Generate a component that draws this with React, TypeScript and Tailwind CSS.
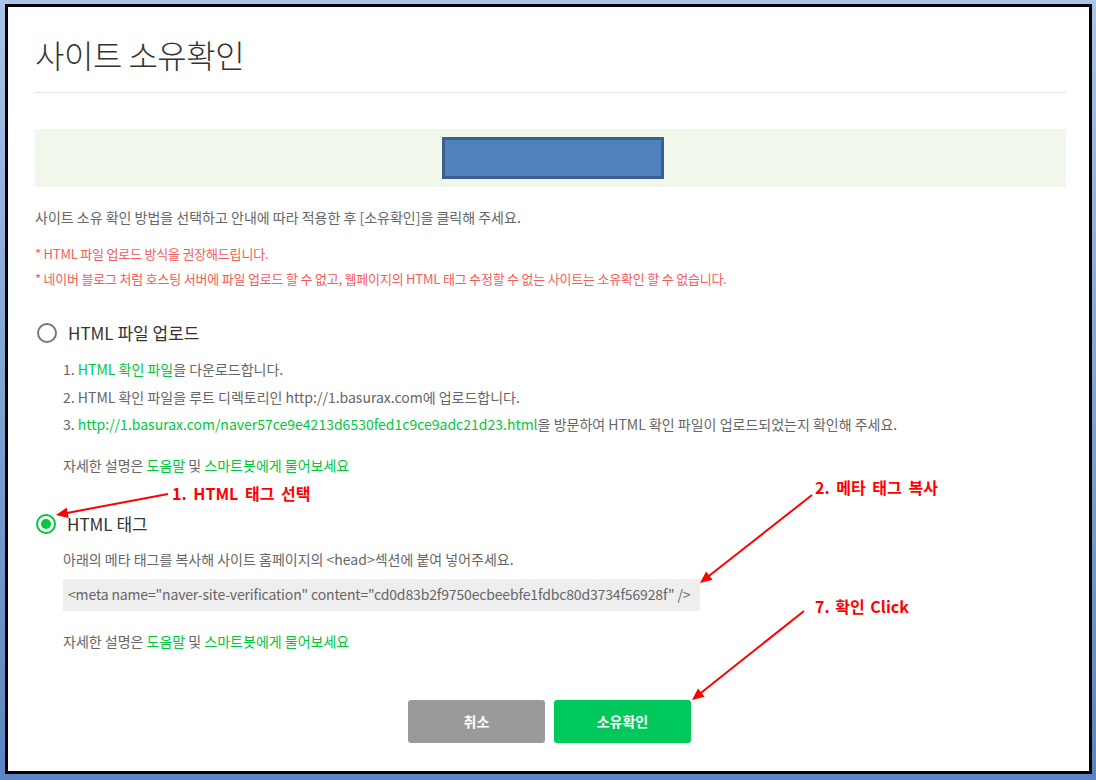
import React from 'react';

const green = 'text-[#00c73c]';

function Radio({ checked }: { checked?: boolean }) {
  if (checked) {
    return (
      <span className="flex h-[20px] w-[20px] items-center justify-center rounded-full border-[2.5px] border-[#00c73c] bg-white">
        <span className="h-[10px] w-[10px] rounded-full bg-[#00c73c]" />
      </span>
    );
  }
  return <span className="block h-[20px] w-[20px] rounded-full border-2 border-[#777] bg-white" />;
}

function HelpLine() {
  return (
    <p className="text-[14px] leading-[20px] text-[#666]">
      자세한 설명은 <span className={green}>도움말</span> 및 <span className={green}>스마트봇에게 물어보세요</span>
    </p>
  );
}

function Arrow({ x1, y1, x2, y2 }: { x1: number; y1: number; x2: number; y2: number }) {
  const a = Math.atan2(y2 - y1, x2 - x1);
  const len = 13;
  const w = 0.42;
  const p1 = [x2 - len * Math.cos(a - w), y2 - len * Math.sin(a - w)];
  const p2 = [x2 - len * Math.cos(a + w), y2 - len * Math.sin(a + w)];
  return (
    <g>
      <line x1={x1} y1={y1} x2={x2 - 6 * Math.cos(a)} y2={y2 - 6 * Math.sin(a)} stroke="#ff0000" strokeWidth={2} />
      <polygon points={`${x2},${y2} ${p1[0]},${p1[1]} ${p2[0]},${p2[1]}`} fill="#ff0000" />
    </g>
  );
}

export default function App() {
  return (
    <div
      className="relative h-[780px] w-[1096px] bg-gradient-to-b from-[#a9c4e6] to-[#5b84c1] pb-[6px] pl-[5px] pr-[4px] pt-[4px]"
      style={{ fontFamily: '"Noto Sans CJK KR", "Noto Sans", sans-serif' }}
    >
      <div className="h-full w-full border-[3px] border-black bg-white pl-[27px] pr-[23px]">
        <h1 className="pt-[27px] text-[32px] font-light leading-[40px] text-[#333] tracking-[-0.5px]">사이트 소유확인</h1>
        <div className="mt-[18px] h-px bg-[#e3e3e3]" />

        <div className="mt-[36px] flex h-[58px] items-center justify-center bg-[#f1f7ea]">
          <div className="ml-[4px] h-[42px] w-[222px] border-[3px] border-[#3b5f8e] bg-[#4f81bd]" />
        </div>

        <p className="mt-[20px] text-[14px] leading-[20px] text-[#666]">
          사이트 소유 확인 방법을 선택하고 안내에 따라 적용한 후 [소유확인]을 클릭해 주세요.
        </p>
        <div className="mt-[14px] text-[13px] leading-[25px] text-[#f55b5b] tracking-[-0.2px]">
          <p>* HTML 파일 업로드 방식을 권장해드립니다.</p>
          <p>* 네이버 블로그 처럼 호스팅 서버에 파일 업로드 할 수 없고, 웹페이지의 HTML 태그 수정할 수 없는 사이트는 소유확인 할 수 없습니다.</p>
        </div>

        <div className="mt-[30px] flex h-[24px] items-center">
          <span className="ml-[2px]"><Radio /></span>
          <span className="ml-[11px] text-[17px] leading-[24px] text-[#333]">HTML 파일 업로드</span>
        </div>
        <div className="ml-[28px] mt-[11px] text-[14px] leading-[27.5px] text-[#666]">
          <p>
            1. <span className={green}>HTML 확인 파일</span>을 다운로드합니다.
          </p>
          <p>2. HTML 확인 파일을 루트 디렉토리인 http://1.basurax.com에 업로드합니다.</p>
          <p>
            3. <span className={green}>http://1.basurax.com/naver57ce9e4213d6530fed1c9ce9adc21d23.html</span>을 방문하여 HTML 확인 파일이 업로드되었는지 확인해 주세요.
          </p>
          <div className="mt-[16px]">
            <HelpLine />
          </div>
        </div>

        <div className="mt-[37px] flex h-[24px] items-center">
          <span className="ml-[1px]"><Radio checked /></span>
          <span className="ml-[11px] text-[17px] leading-[24px] text-[#333]">HTML 태그</span>
        </div>
        <div className="ml-[28px] mt-[13px]">
          <p className="text-[14px] leading-[20px] text-[#666]">
            아래의 메타 태그를 복사해 사이트 홈페이지의 &lt;head&gt;섹션에 붙여 넣어주세요.
          </p>
          <div className="mt-[10px] flex h-[32px] w-[637px] items-center whitespace-nowrap bg-[#eeeeee] pl-[5px] text-[14px] tracking-[-0.15px] text-[#666]">
            &lt;meta name="naver-site-verification" content="cd0d83b2f9750ecbeebfe1fdbc80d3734f56928f" /&gt;
          </div>
          <div className="mt-[20px]">
            <HelpLine />
          </div>
        </div>

        <div className="mt-[49px] flex justify-center gap-[9px] pr-[2px]">
          <button className="h-[43px] w-[137px] rounded-[3px] bg-[#9a9a9a] text-[14px] font-bold text-white">취소</button>
          <button className="h-[43px] w-[137px] rounded-[3px] bg-[#00c85a] text-[14px] font-bold text-white">소유확인</button>
        </div>
      </div>

      <span className="absolute left-[172px] top-[482px] text-[16px] font-bold leading-[22px] text-[#ff0000] [word-spacing:3px]">1. HTML 태그 선택</span>
      <span className="absolute left-[815px] top-[476px] text-[16px] font-bold leading-[22px] text-[#ff0000] [word-spacing:3px]">2. 메타 태그 복사</span>
      <span className="absolute left-[815px] top-[595px] text-[16px] font-bold leading-[22px] text-[#ff0000] [word-spacing:2px]">7. 확인 Click</span>
      <svg className="pointer-events-none absolute left-0 top-0" width={1096} height={780}>
        <Arrow x1={168} y1={494} x2={56} y2={515} />
        <Arrow x1={812} y1={495} x2={700} y2={583} />
        <Arrow x1={804} y1={611} x2={692} y2={700} />
      </svg>
    </div>
  );
}
